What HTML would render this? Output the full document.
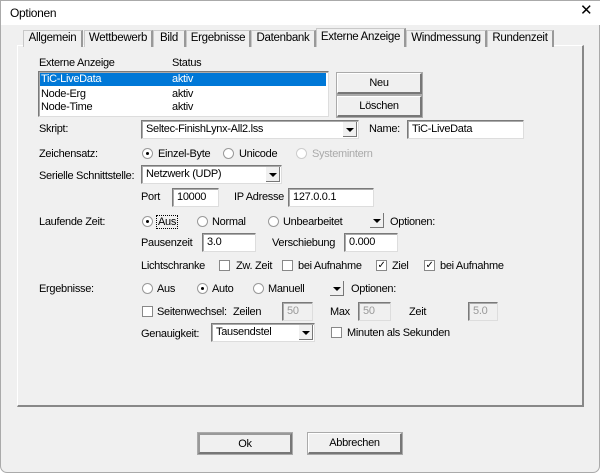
<!DOCTYPE html>
<html><head><meta charset="utf-8"><style>
*{box-sizing:border-box;margin:0;padding:0}
body{width:600px;height:474px;background:#fff;font-family:"Liberation Sans",sans-serif;font-size:11px;letter-spacing:-0.3px;color:#000;position:relative;overflow:hidden}
.win{position:absolute;left:0;top:0;width:600px;height:473px;background:#f0f0f0;border:1px solid #aaa;border-radius:0 0 7px 7px}
.title{position:absolute;left:0;top:0;width:600px;height:24px;background:#fff}
.a{position:absolute;white-space:nowrap;line-height:14px}
.tab{position:absolute;top:29px;height:17px;border:1px solid #c8c8c8;border-bottom:none;background:#f0f0f0;text-align:center;line-height:15px;font-size:11.5px;border-right:2px solid #999}
.panel{position:absolute;left:16px;top:44px;width:567px;height:362px;border:1px solid #fff;border-right:2px solid #888;border-bottom:2px solid #888;background:#f0f0f0}
.inp{position:absolute;height:19px;background:#fff;border:1px solid #7a7a7a;border-right-color:#ddd;border-bottom-color:#ddd;box-shadow:inset 1px 1px 0 #aaa;padding-left:4px;line-height:16px;white-space:nowrap}
.dis{background:#f0f0f0;color:#999}
.btn{position:absolute;height:21px;background:#f0f0f0;border:1px solid #fff;border-right:2px solid #777;border-bottom:2px solid #777;outline:1px solid #aaa;text-align:center;line-height:18px}
.arr{position:absolute;right:1px;top:1px;width:14px;height:15px;background:#f0f0f0;border-right:1px solid #777;border-bottom:1px solid #777}
.arr:after{content:"";position:absolute;left:3px;top:6px;border:4px solid transparent;border-top:4px solid #000;border-bottom:none}
.rad{position:absolute;width:11px;height:11px;border-radius:50%;border:1px solid #999;background:#fff}
.rad.on:after{content:"";position:absolute;left:3px;top:3px;width:3px;height:3px;border-radius:50%;background:#000}
.chk{position:absolute;width:11px;height:11px;border:1px solid #888;background:#fff;font-size:10px;line-height:9px;text-align:center}
</style></head><body>
<div class="win">
<div class="title"></div>
<div class="a" style="left:9px;top:5px;font-size:12px">Optionen</div>
<div class="a" style="left:579px;top:3px;font-size:15px">✕</div>

<div class="panel"></div>
<div class="tab" style="left:22px;width:60px">Allgemein</div>
<div class="tab" style="left:83px;width:69px">Wettbewerb</div>
<div class="tab" style="left:152px;width:33px">Bild</div>
<div class="tab" style="left:185px;width:65px">Ergebnisse</div>
<div class="tab" style="left:250px;width:65px">Datenbank</div>
<div class="tab" style="left:315px;width:90px;top:27px;height:19px;border-bottom:none;z-index:2;line-height:17px">Externe Anzeige</div>
<div class="tab" style="left:405px;width:81px">Windmessung</div>
<div class="tab" style="left:486px;width:67px">Rundenzeit</div>

<div class="a" style="left:38px;top:55px">Externe Anzeige</div>
<div class="a" style="left:171px;top:55px">Status</div>
<div class="inp" style="left:37px;top:70px;width:291px;height:46px;padding:1px"></div>
<div class="a" style="left:39px;top:72px;width:286px;height:13px;background:#0078d7;color:#fff;line-height:13px;padding-left:1px">TiC-LiveData<span style="position:absolute;left:132px">aktiv</span></div>
<div class="a" style="left:40px;top:86px">Node-Erg</div><div class="a" style="left:171px;top:86px">aktiv</div>
<div class="a" style="left:40px;top:99px">Node-Time</div><div class="a" style="left:171px;top:99px">aktiv</div>
<div class="btn" style="left:336px;top:72px;width:85px">Neu</div>
<div class="btn" style="left:336px;top:95px;width:85px">Löschen</div>

<div class="a" style="left:38px;top:121px">Skript:</div>
<div class="inp" style="left:140px;top:119px;width:218px">Seltec-FinishLynx-All2.lss<div class="arr"></div></div>
<div class="a" style="left:368px;top:121px">Name:</div>
<div class="inp" style="left:406px;top:119px;width:117px">TiC-LiveData</div>

<div class="a" style="left:38px;top:146px">Zeichensatz:</div>
<div class="rad on" style="left:141px;top:147px"></div><div class="a" style="left:157px;top:146px">Einzel-Byte</div>
<div class="rad" style="left:222px;top:147px"></div><div class="a" style="left:238px;top:146px">Unicode</div>
<div class="rad" style="left:295px;top:147px;border-color:#ccc"></div><div class="a" style="left:311px;top:146px;color:#aaa">Systemintern</div>

<div class="a" style="left:38px;top:168px">Serielle Schnittstelle:</div>
<div class="inp" style="left:140px;top:164px;width:141px">Netzwerk (UDP)<div class="arr"></div></div>
<div class="a" style="left:140px;top:189px">Port</div>
<div class="inp" style="left:171px;top:187px;width:47px">10000</div>
<div class="a" style="left:233px;top:189px">IP Adresse</div>
<div class="inp" style="left:287px;top:187px;width:86px">127.0.0.1</div>

<div class="a" style="left:38px;top:214px">Laufende Zeit:</div>
<div class="rad on" style="left:141px;top:215px"></div><div class="a" style="left:155px;top:214px;border:1px dotted #000;padding:0 1px;line-height:12px">Aus</div>
<div class="rad" style="left:196px;top:215px"></div><div class="a" style="left:211px;top:214px">Normal</div>
<div class="rad" style="left:267px;top:215px"></div><div class="a" style="left:282px;top:214px">Unbearbeitet</div>
<div class="inp" style="left:368px;top:212px;width:15px;height:17px;padding:0;background:#f0f0f0;border:none;box-shadow:none"><div class="arr" style="right:0;top:0"></div></div>
<div class="a" style="left:389px;top:214px">Optionen:</div>

<div class="a" style="left:140px;top:235px">Pausenzeit</div>
<div class="inp" style="left:201px;top:232px;width:54px">3.0</div>
<div class="a" style="left:271px;top:235px">Verschiebung</div>
<div class="inp" style="left:343px;top:232px;width:54px">0.000</div>

<div class="a" style="left:140px;top:258px">Lichtschranke</div>
<div class="chk" style="left:218px;top:259px"></div><div class="a" style="left:235px;top:258px">Zw. Zeit</div>
<div class="chk" style="left:281px;top:259px"></div><div class="a" style="left:297px;top:258px">bei Aufnahme</div>
<div class="chk" style="left:375px;top:259px">✓</div><div class="a" style="left:391px;top:258px">Ziel</div>
<div class="chk" style="left:423px;top:259px">✓</div><div class="a" style="left:439px;top:258px">bei Aufnahme</div>

<div class="a" style="left:38px;top:281px">Ergebnisse:</div>
<div class="rad" style="left:141px;top:282px"></div><div class="a" style="left:156px;top:281px">Aus</div>
<div class="rad on" style="left:196px;top:282px"></div><div class="a" style="left:211px;top:281px">Auto</div>
<div class="rad" style="left:252px;top:282px"></div><div class="a" style="left:267px;top:281px">Manuell</div>
<div class="inp" style="left:328px;top:280px;width:15px;height:17px;padding:0;background:#f0f0f0;border:none;box-shadow:none"><div class="arr" style="right:0;top:0"></div></div>
<div class="a" style="left:350px;top:281px">Optionen:</div>

<div class="chk" style="left:141px;top:305px"></div><div class="a" style="left:156px;top:304px">Seitenwechsel:</div>
<div class="a" style="left:232px;top:304px">Zeilen</div>
<div class="inp dis" style="left:281px;top:301px;width:31px">50</div>
<div class="a" style="left:329px;top:304px">Max</div>
<div class="inp dis" style="left:357px;top:301px;width:33px">50</div>
<div class="a" style="left:408px;top:304px">Zeit</div>
<div class="inp dis" style="left:467px;top:301px;width:30px">5.0</div>

<div class="a" style="left:140px;top:326px">Genauigkeit:</div>
<div class="inp" style="left:210px;top:322px;width:104px">Tausendstel<div class="arr"></div></div>
<div class="chk" style="left:330px;top:326px"></div><div class="a" style="left:346px;top:325px">Minuten als Sekunden</div>

<div class="btn" style="left:197px;top:432px;width:94px;border:2px solid #777;border-top-color:#999;border-left-color:#999">Ok</div>
<div class="btn" style="left:307px;top:432px;width:94px">Abbrechen</div>
</div>
</body></html>
